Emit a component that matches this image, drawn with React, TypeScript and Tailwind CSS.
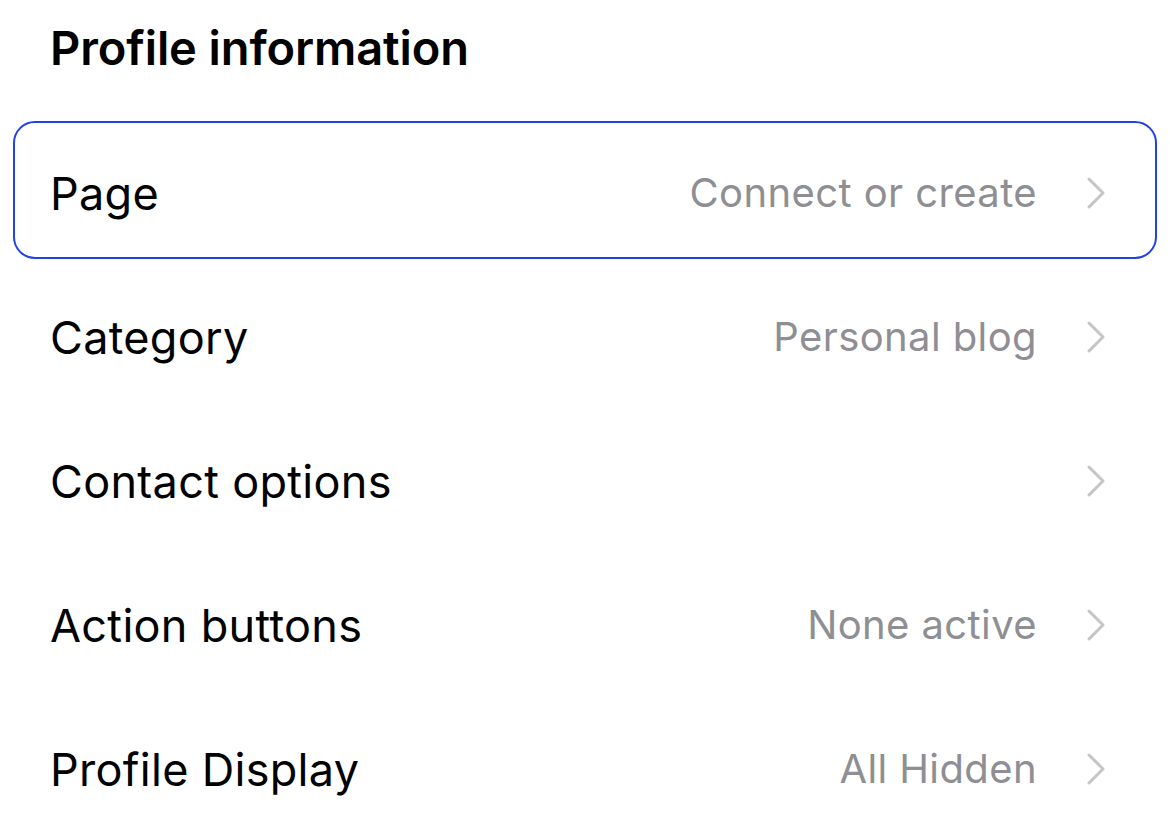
import React from "react";

const rows = [
	{ label: "Page", value: "Connect or create", active: true },
	{ label: "Category", value: "Personal blog" },
	{ label: "Contact options", value: "" },
	{ label: "Action buttons", value: "None active" },
	{ label: "Profile Display", value: "All Hidden" },
];

const Chevron = () => (
	<svg width="24" height="34" viewBox="0 0 24 34" fill="none" className="shrink-0">
		<path d="M4 3 L18 17 L4 31" stroke="#c5c5c8" strokeWidth="3" strokeLinecap="round" strokeLinejoin="round" />
	</svg>
);

const App = () => {
	return (
		<div className="w-[1170px] h-[814px] overflow-hidden bg-white text-black" style={{ fontFamily: "Inter, 'Noto Sans', sans-serif" }}>
			<div className="h-[121px] pt-[16px] pl-[50px]">
				<h1 className="text-[47px] leading-[64px] font-semibold tracking-[-0.1px]">Profile information</h1>
			</div>
			<div className="flex flex-col">
				{rows.map((row) => (
					<div
						key={row.label}
						className={`mx-[13px] h-[138px] mb-[6px] pt-[6px] flex items-center pl-[35px] pr-[46px] rounded-[22px] border-2 ${row.active ? "border-[#2341ea]" : "border-transparent"}`}
					>
						<span className="text-[45px] leading-none tracking-[0.3px]">{row.label}</span>
						<span className="ml-auto text-[40px] leading-none tracking-[0.4px] text-[#8e8e93]">{row.value}</span>
						<span className="ml-[48px]">
							<Chevron />
						</span>
					</div>
				))}
			</div>
		</div>
	);
};

export default App;
